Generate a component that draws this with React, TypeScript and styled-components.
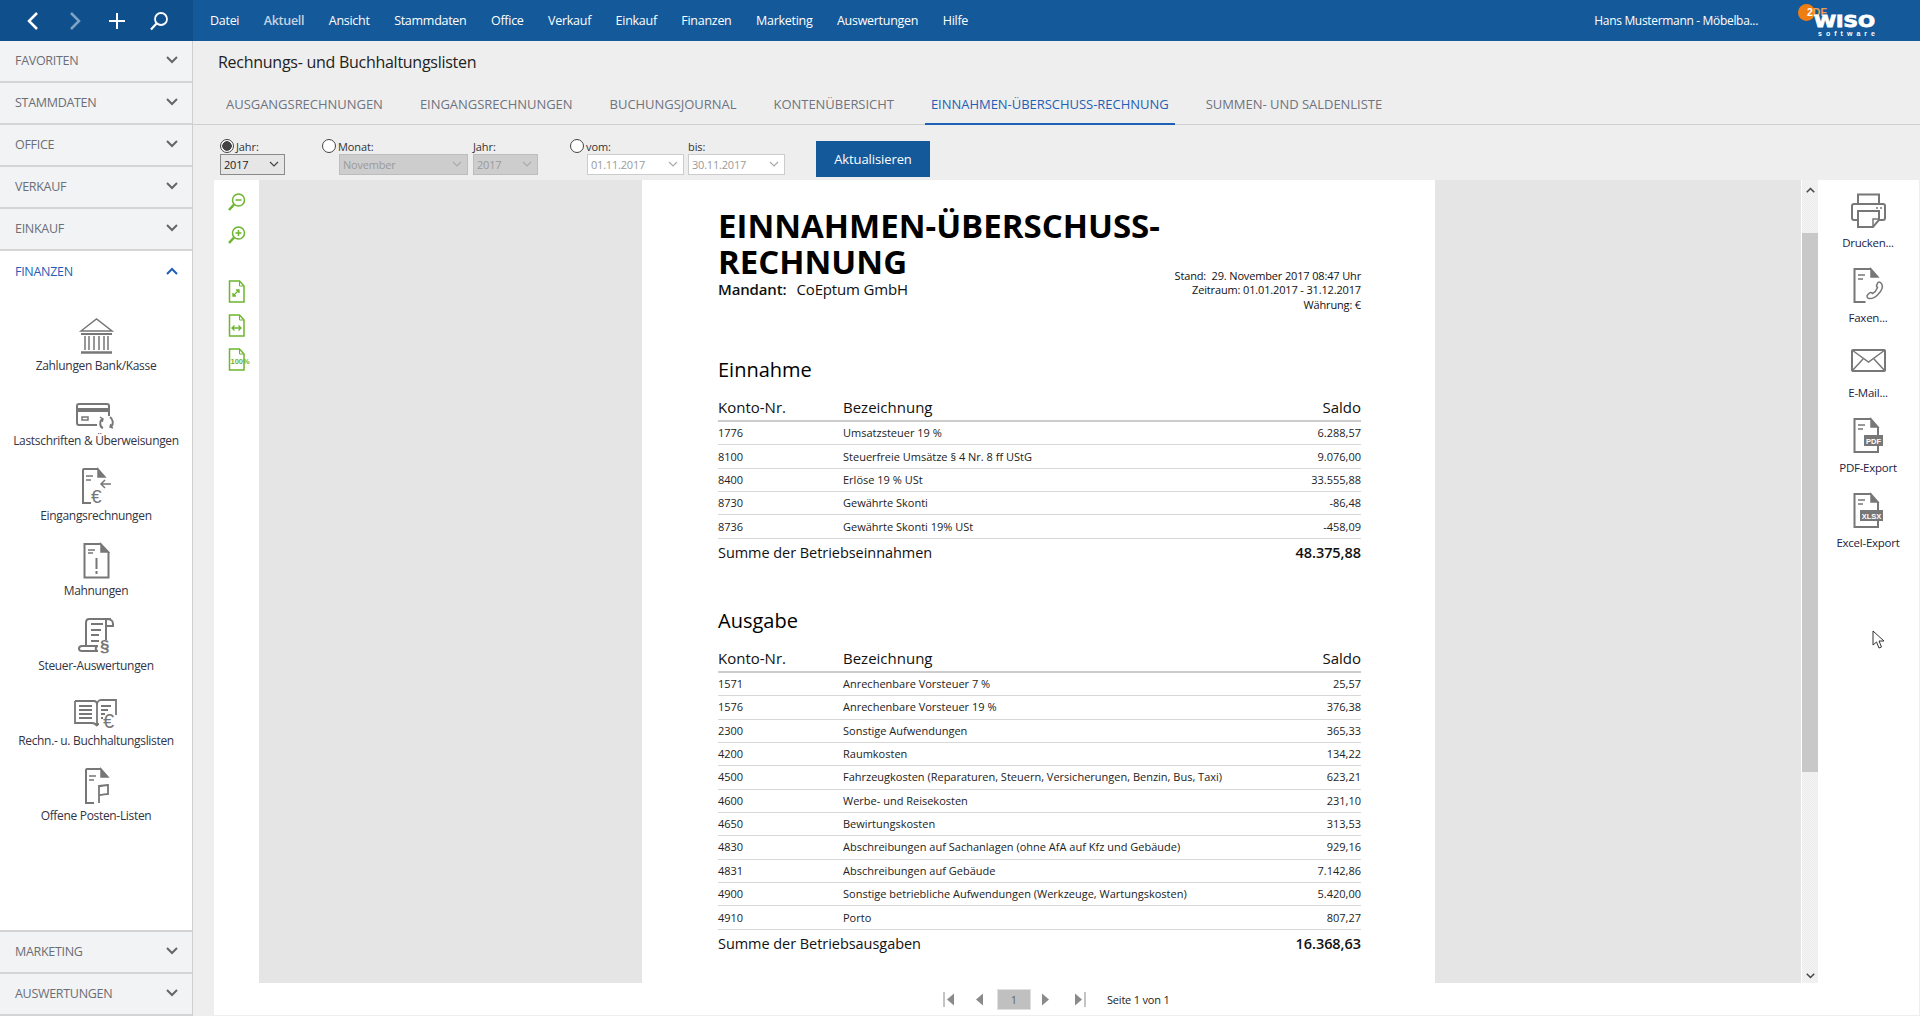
import { ReactNode } from "react";
import styled, { createGlobalStyle } from "styled-components";

const GlobalStyle = createGlobalStyle`
  html, body {
    margin: 0;
    padding: 0;
    overflow: hidden;
    background: #eeeeee;
    font-family: "Open Sans", "Noto Sans", sans-serif;
    color: #222;
  }
  * { box-sizing: border-box; }
  svg { overflow: visible; }
`;

const einnahmen = [
  ["1776", "Umsatzsteuer 19 %", "6.288,57"],
  ["8100", "Steuerfreie Umsätze § 4 Nr. 8 ff UStG", "9.076,00"],
  ["8400", "Erlöse 19 % USt", "33.555,88"],
  ["8730", "Gewährte Skonti", "-86,48"],
  ["8736", "Gewährte Skonti 19% USt", "-458,09"],
];

const ausgaben = [
  ["1571", "Anrechenbare Vorsteuer 7 %", "25,57"],
  ["1576", "Anrechenbare Vorsteuer 19 %", "376,38"],
  ["2300", "Sonstige Aufwendungen", "365,33"],
  ["4200", "Raumkosten", "134,22"],
  ["4500", "Fahrzeugkosten (Reparaturen, Steuern, Versicherungen, Benzin, Bus, Taxi)", "623,21"],
  ["4600", "Werbe- und Reisekosten", "231,10"],
  ["4650", "Bewirtungskosten", "313,53"],
  ["4830", "Abschreibungen auf Sachanlagen (ohne AfA auf Kfz und Gebäude)", "929,16"],
  ["4831", "Abschreibungen auf Gebäude", "7.142,86"],
  ["4900", "Sonstige betriebliche Aufwendungen (Werkzeuge, Wartungskosten)", "5.420,00"],
  ["4910", "Porto", "807,27"],
];

const menu = ["Datei", "Aktuell", "Ansicht", "Stammdaten", "Office", "Verkauf", "Einkauf", "Finanzen", "Marketing", "Auswertungen", "Hilfe"];
const tabs = ["AUSGANGSRECHNUNGEN", "EINGANGSRECHNUNGEN", "BUCHUNGSJOURNAL", "KONTENÜBERSICHT", "EINNAHMEN-ÜBERSCHUSS-RECHNUNG", "SUMMEN- UND SALDENLISTE"];

const G = "#777";
const Ico = ({ w, h, children, color = G }: { w: number; h: number; children: ReactNode; color?: string }) => (
  <svg width={w} height={h} viewBox={`0 0 ${w} ${h}`} fill="none" stroke={color} strokeWidth="2">
    {children}
  </svg>
);

const DocHead = () => (
  <>
    <path d="M18 1H4a1.500 1.500 0 0 0-1 1v33h8M2 1" strokeWidth="2" />
    <path d="M18 1l7 8h-7z" fill={G} strokeWidth="1.500" />
    <path d="M6 8h7M6 12h5" strokeWidth="1.500" />
  </>
);

const navItems: { label: string; icon: ReactNode }[] = [
  {
    label: "Zahlungen Bank/Kasse",
    icon: (
      <Ico w={33} h={36}>
        <path d="M1 13L16.500 1 32 13z" strokeWidth="1.500" />
        <path d="M1 16h31" />
        <path d="M5 18v14M9 18v14M14 18v14M19 18v14M24 18v14M28 18v14" strokeWidth="1.500" />
        <path d="M1 34.500h31" strokeWidth="2.500" />
      </Ico>
    ),
  },
  {
    label: "Lastschriften & Überweisungen",
    icon: (
      <Ico w={40} h={26}>
        <path d="M21 22H3a2 2 0 0 1-2-2V3a2 2 0 0 1 2-2h28a2 2 0 0 1 2 2v10" />
        <path d="M1 7h32" strokeWidth="4" />
        <rect x="6" y="14" width="6" height="3" strokeWidth="1.500" />
        <path d="M27 25c-3-1-4-6-1-9M34 14c3 2 4 7 1 10" />
        <path d="M24 14l3 2-1 3M37 25l-3-1 1-3" strokeWidth="1.500" />
      </Ico>
    ),
  },
  {
    label: "Eingangsrechnungen",
    icon: (
      <Ico w={32} h={36}>
        <DocHead />
        <path d="M31 16H21M25 12l-4 4 4 4" strokeWidth="1.500" />
        <text x="11" y="35" fontSize="19" fill={G} stroke="none" fontFamily="Liberation Sans">€</text>
      </Ico>
    ),
  },
  {
    label: "Mahnungen",
    icon: (
      <Ico w={27} h={36}>
        <path d="M18 1H1.500v33.500h24V9" />
        <path d="M18 1l7.500 8H18z" fill={G} strokeWidth="1.500" />
        <path d="M5 7h7M5 10h5" strokeWidth="1.500" />
        <path d="M13.500 15v11M13.500 28v3" strokeWidth="2" />
      </Ico>
    ),
  },
  {
    label: "Steuer-Auswertungen",
    icon: (
      <Ico w={36} h={36}>
        <path d="M33 1H11C8 1 8 3 8 5v23H4c-4 0-4 5 0 5h16c-3 0-3-5 0-5H8" />
        <path d="M28 1c6 0 7 2 7 5v2h-7V1M28 8v14" />
        <path d="M13 6h12M13 12h10M13 17h8M13 23h8" strokeWidth="1.800" />
        <text x="22" y="34" fontSize="17" fontWeight="700" fill={G} stroke="none" fontFamily="Liberation Sans">§</text>
      </Ico>
    ),
  },
  {
    label: "Rechn.- u. Buchhaltungslisten",
    icon: (
      <Ico w={45} h={30}>
        <path d="M1 2h19c2 0 3 2 3 4 0-3 2-5 4-5h15v15M23 6v20M1 2v22h17c2 0 4 1 5 3 0-1 1-2 2-2" strokeWidth="1.800" />
        <path d="M5 7h13M5 11h13M5 15h13M5 19h13M27 7h10M27 11h7M27 15h4M27 19h2" strokeWidth="1.800" />
        <text x="29" y="29" fontSize="20" fill={G} stroke="none" fontFamily="Liberation Sans">€</text>
      </Ico>
    ),
  },
  {
    label: "Offene Posten-Listen",
    icon: (
      <Ico w={27} h={36}>
        <DocHead />
        <path d="M16 35V18c4 0 5-1 9-1v9c-3 0-5 1-9 1" strokeWidth="1.800" />
      </Ico>
    ),
  },
];

const DocIcon = ({ outline, children }: { outline: string; children: ReactNode }) => (
  <Ico w={31} h={35}>
    <path d={outline} />
    <path d="M18 1l7 8h-7z" fill={G} strokeWidth="1.500" />
    <path d="M5 7h7M5 11h5" strokeWidth="1.500" />
    {children}
  </Ico>
);

const BadgeText = ({ x, w, text }: { x: number; w: number; text: string }) => (
  <>
    <rect x={x} y="17" width={w} height="11" fill={G} stroke="none" />
    <text x={x + w / 2} y="25.500" fontSize="7.500" fontWeight="700" textAnchor="middle" fill="#fff" stroke="none" fontFamily="Liberation Sans">
      {text}
    </text>
  </>
);

const actions: { label: string; icon: ReactNode }[] = [
  {
    label: "Drucken...",
    icon: (
      <Ico w={35} h={35}>
        <path d="M7 11V1.500h21V11" />
        <path d="M7 27H3a2 2 0 0 1-2-2V13a2 2 0 0 1 2-2h29a2 2 0 0 1 2 2v12a2 2 0 0 1-2 2h-4" />
        <path d="M7 18h21v9l-6 7H7z" />
        <path d="M28 26h-6v8" strokeWidth="1.500" />
        <path d="M25 15h2M29 15h2" strokeWidth="1.500" />
      </Ico>
    ),
  },
  {
    label: "Faxen...",
    icon: (
      <DocIcon outline="M18 1H1.500v33h11">
        <path
          d="M25 14.500c1.500-1 3 0 4 2 1 3-1 7-4 10-3 3-6 4.500-9 4-2-.5-2.500-2.500-1.500-3.500l2-2c1-.8 2-.5 3 .5 2-1 4-3 5-6-1-1-1.500-2-.5-3z"
          strokeWidth="1.500"
        />
      </DocIcon>
    ),
  },
  {
    label: "E-Mail...",
    icon: (
      <Ico w={35} h={23}>
        <rect x="1" y="1" width="33" height="21" rx="1" />
        <path d="M1 1l16.500 12L34 1M1 22l11-12M34 22L23 10" strokeWidth="1.500" />
      </Ico>
    ),
  },
  {
    label: "PDF-Export",
    icon: (
      <DocIcon outline="M18 1H1.500v33h23.500v-6M25 9v8">
        <BadgeText x={11} w={19} text="PDF" />
      </DocIcon>
    ),
  },
  {
    label: "Excel-Export",
    icon: (
      <DocIcon outline="M18 1H1.500v33h23.500v-6M25 9v8">
        <BadgeText x={7} w={23} text="XLSX" />
      </DocIcon>
    ),
  },
];

const Chevron = ({ up, color = "#666", small }: { up?: boolean; color?: string; small?: boolean }) => (
  <svg width={small ? 9 : 12} height={small ? 6 : 8} viewBox="0 0 12 8" fill="none" stroke={color} strokeWidth="2">
    <path d={up ? "M1 7l5-5 5 5" : "M1 1l5 5 5-5"} />
  </svg>
);

const SmallChevron = ({ color }: { color: string }) => (
  <svg width="10" height="6" viewBox="0 0 10 6" fill="none" stroke={color} strokeWidth="1.200">
    <path d="M1 1l4 4 4-4" />
  </svg>
);

const GreenPage = ({ children }: { children: ReactNode }) => (
  <svg width="22" height="23" viewBox="0 0 22 23" fill="none" stroke="#6cb52d" strokeWidth="1.500">
    <path d="M3.500 1h10l4.500 5v16H3.500z" />
    <path d="M13.500 1v5H18" strokeWidth="1" />
    {children}
  </svg>
);

const Lens = ({ plus }: { plus?: boolean }) => (
  <svg width="18" height="18" viewBox="0 0 18 18" fill="none" stroke="#6cb52d" strokeWidth="1.500">
    <circle cx="10.500" cy="7" r="6" />
    <path d="M6 11.500L1 17" strokeWidth="2.500" />
    <path d={plus ? "M7.500 7h6M10.500 4v6" : "M7.500 7h6"} />
  </svg>
);

const Tri = ({ dir, bar, left }: { dir: "l" | "r"; bar?: boolean; left: number }) => (
  <TriBox $left={left} width="13" height="15" viewBox="0 0 13 15" fill="#8a8a8a" stroke="none">
    {dir === "l" ? <path d="M11 1.500L4 7.500l7 6z" /> : <path d="M2 1.500l7 6-7 6z" />}
    {bar && <path d={dir === "l" ? "M0.500 0h1v15h-1z" : "M11.500 0h1v15h-1z"} />}
  </TriBox>
);

const Report = ({ title, rows, sumLabel, sum }: { title: string; rows: string[][]; sumLabel: string; sum: string }) => (
  <>
    <SectionTitle>{title}</SectionTitle>
    <HeadRow>
      <KontoCell>Konto-Nr.</KontoCell>
      <NameCell>Bezeichnung</NameCell>
      <span>Saldo</span>
    </HeadRow>
    {rows.map((r) => (
      <Row key={r[0]}>
        <KontoCell>{r[0]}</KontoCell>
        <NameCell>{r[1]}</NameCell>
        <span>{r[2]}</span>
      </Row>
    ))}
    <SumRow>
      <span>{sumLabel}</span>
      <SumValue>{sum}</SumValue>
    </SumRow>
  </>
);

const App = () => {
  return (
    <Shell>
      <GlobalStyle />
      <TopBar>
        <QuickActions>
          <QuickButton>
            <svg width="14" height="20" viewBox="0 0 14 20" fill="none" stroke="#fff" strokeWidth="2.500"><path d="M11 2L3 10l8 8" /></svg>
          </QuickButton>
          <QuickButton>
            <svg width="14" height="20" viewBox="0 0 14 20" fill="none" stroke="#7fa3c7" strokeWidth="2.500"><path d="M3 2l8 8-8 8" /></svg>
          </QuickButton>
          <QuickButton>
            <svg width="18" height="18" viewBox="0 0 18 18" fill="none" stroke="#fff" strokeWidth="2"><path d="M9 1v16M1 9h16" /></svg>
          </QuickButton>
          <QuickButton>
            <svg width="20" height="20" viewBox="0 0 20 20" fill="none" stroke="#fff" strokeWidth="1.800">
              <circle cx="12" cy="8" r="6" />
              <path d="M7.500 12.500L2 18.500" strokeWidth="2.200" />
            </svg>
          </QuickButton>
        </QuickActions>
        <Menu>
          {menu.map((m) => (
            <MenuItem key={m} $active={m === "Aktuell"}>{m}</MenuItem>
          ))}
        </Menu>
        <UserName>Hans Mustermann - Möbelba...</UserName>
        <svg width="80" height="41" viewBox="0 0 80 41">
          <circle cx="8.500" cy="12.500" r="8.500" fill="#f07d12" />
          <text x="9" y="16" fontSize="10.500" fontWeight="700" fill="#f0a050" fontFamily="Liberation Sans">
            <tspan fill="#fff">2</tspan>DF
          </text>
          <text x="16" y="27" fontSize="15" fontWeight="700" fill="#fff" stroke="#fff" strokeWidth="0.800" fontFamily="DejaVu Sans" textLength="61" lengthAdjust="spacingAndGlyphs">WISO</text>
          <text x="20" y="36" fontSize="7" fontWeight="700" fill="#fff" fontFamily="Liberation Sans" textLength="57">software</text>
        </svg>
      </TopBar>
      <Body>
        <Sidebar>
          {["FAVORITEN", "STAMMDATEN", "OFFICE", "VERKAUF", "EINKAUF"].map((s) => (
            <GroupHead key={s}>
              {s}
              <Chevron />
            </GroupHead>
          ))}
          <GroupHead $open>
            FINANZEN
            <Chevron up color="#1f5fb5" />
          </GroupHead>
          <NavPanel>
            {navItems.map((n) => (
              <NavItem key={n.label}>
                <NavIcon>{n.icon}</NavIcon>
                <NavLabel>{n.label}</NavLabel>
              </NavItem>
            ))}
          </NavPanel>
          {["MARKETING", "AUSWERTUNGEN"].map((s) => (
            <GroupHead key={s}>
              {s}
              <Chevron />
            </GroupHead>
          ))}
        </Sidebar>
        <Main>
          <PageTitle>Rechnungs- und Buchhaltungslisten</PageTitle>
          <Tabs>
            {tabs.map((t) => (
              <Tab key={t} $active={t.startsWith("EINNAHMEN")}>{t}</Tab>
            ))}
          </Tabs>
          <Filters>
            <FilterGroup $width={102}>
              <FilterLabel><Radio $checked />Jahr:</FilterLabel>
              <Select $width={65}>2017<SmallChevron color="#444" /></Select>
            </FilterGroup>
            <FilterGroup $width={151}>
              <FilterLabel><Radio />Monat:</FilterLabel>
              <Select $width={129} $inset={17} $disabled>November<SmallChevron color="#aaa" /></Select>
            </FilterGroup>
            <FilterGroup $width={97}>
              <FilterLabel>Jahr:</FilterLabel>
              <Select $width={65} $disabled>2017<SmallChevron color="#aaa" /></Select>
            </FilterGroup>
            <FilterGroup $width={118}>
              <FilterLabel><Radio />vom:</FilterLabel>
              <Select $width={97} $inset={17} $date>01.11.2017<SmallChevron color="#aaa" /></Select>
            </FilterGroup>
            <FilterGroup $width={128}>
              <FilterLabel>bis:</FilterLabel>
              <Select $width={97} $date>30.11.2017<SmallChevron color="#aaa" /></Select>
            </FilterGroup>
            <UpdateButton>Aktualisieren</UpdateButton>
          </Filters>
          <Workspace>
            <ToolColumn>
              <ToolButton $top={13}><Lens /></ToolButton>
              <ToolButton $top={15}><Lens plus /></ToolButton>
              <ToolButton $top={36}>
                <GreenPage>
                  <path d="M7 16l6-6M10 10h3v3M7 13v3h3" strokeWidth="1.300" />
                </GreenPage>
              </ToolButton>
              <ToolButton $top={11}>
                <GreenPage>
                  <path d="M6 14h9M8.500 11.500L6 14l2.500 2.500M12.500 11.500L15 14l-2.500 2.500" strokeWidth="1.300" />
                </GreenPage>
              </ToolButton>
              <ToolButton $top={11}>
                <GreenPage>
                  <text x="4.500" y="16" fontSize="7.500" fontWeight="700" fill="#6cb52d" stroke="none" fontFamily="Liberation Sans">100%</text>
                </GreenPage>
              </ToolButton>
            </ToolColumn>
            <Center>
              <Stage>
                <Gray>
                  <Paper>
                    <PaperHead>
                      <div>
                        <ReportTitle>EINNAHMEN-ÜBERSCHUSS-<br />RECHNUNG</ReportTitle>
                        <Client><strong>Mandant:</strong><span>CoEptum GmbH</span></Client>
                      </div>
                      <Meta>
                        <div>Stand:&nbsp; 29. November 2017 08:47 Uhr</div>
                        <div>Zeitraum: 01.01.2017 - 31.12.2017</div>
                        <div>Währung: €</div>
                      </Meta>
                    </PaperHead>
                    <Report title="Einnahme" rows={einnahmen} sumLabel="Summe der Betriebseinnahmen" sum="48.375,88" />
                    <Report title="Ausgabe" rows={ausgaben} sumLabel="Summe der Betriebsausgaben" sum="16.368,63" />
                  </Paper>
                </Gray>
                <Scrollbar>
                  <ScrollEnd $h={53}>
                    <Chevron up small color="#444" />
                  </ScrollEnd>
                  <Thumb />
                  <ScrollEnd $h={211} $bottom>
                    <Chevron small color="#444" />
                  </ScrollEnd>
                </Scrollbar>
              </Stage>
              <Pager>
                <Tri dir="l" bar left={0} />
                <Tri dir="l" left={16} />
                <PageBox>1</PageBox>
                <Tri dir="r" left={9} />
                <Tri dir="r" bar left={20} />
                <PagerText>Seite 1 von 1</PagerText>
              </Pager>
            </Center>
            <ActionPanel>
              {actions.map((a) => (
                <ActionItem key={a.label}>
                  <ActionIcon>{a.icon}</ActionIcon>
                  <ActionLabel>{a.label}</ActionLabel>
                </ActionItem>
              ))}
            </ActionPanel>
          </Workspace>
        </Main>
      </Body>
      <Cursor width="13" height="19" viewBox="0 0 13 19" fill="#fff" stroke="#333" strokeWidth="1">
        <path d="M1 1v14l3.500-3 2.500 6 2.500-1-2.500-6H12z" />
      </Cursor>
    </Shell>
  );
};

export default App;

const Shell = styled.div`
  position: relative;
  width: 1920px;
  height: 1016px;
  display: flex;
  flex-direction: column;
  overflow: hidden;
`;

const Cursor = styled.svg`
  position: absolute;
  left: 1872px;
  top: 630px;
`;

const TopBar = styled.header`
  display: flex;
  align-items: center;
  height: 41px;
  background: #14599a;
  padding-right: 42px;
`;

const QuickActions = styled.div`
  display: flex;
  align-items: center;
  height: 100%;
  width: 193px;
  background: #0f4f8c;
  padding-left: 12px;
`;

const QuickButton = styled.div`
  display: flex;
  align-items: center;
  justify-content: center;
  width: 42px;
  height: 100%;
`;

const Menu = styled.nav`
  display: flex;
  gap: 24.500px;
  padding-left: 17px;
`;

const MenuItem = styled.span<{ $active?: boolean }>`
  font-size: 12.500px;
  letter-spacing: -0.280px;
  color: ${(p) => (p.$active ? "#c5d3e2" : "#fff")};
  font-weight: ${(p) => (p.$active ? 600 : 400)};
`;

const UserName = styled.span`
  margin-left: auto;
  margin-right: 40px;
  font-size: 12px;
  letter-spacing: -0.320px;
  color: #fff;
  font-weight: 500;
`;

const Body = styled.div`
  flex: 1;
  display: flex;
  min-height: 0;
`;

const Sidebar = styled.aside`
  width: 193px;
  display: flex;
  flex-direction: column;
  background: #fff;
  border-right: 1px solid #cfcfcf;
`;

const GroupHead = styled.div<{ $open?: boolean }>`
  flex: none;
  display: flex;
  align-items: center;
  justify-content: space-between;
  height: 42px;
  padding: 0 14px 2px 15px;
  font-size: 12.500px;
  letter-spacing: -0.300px;
  font-weight: 500;
  color: ${(p) => (p.$open ? "#1f5fb5" : "#6b6e75")};
  background: ${(p) => (p.$open ? "#fff" : "#f2f3f5")};
  border-bottom: ${(p) => (p.$open ? "none" : "2px solid #d4d4d4")};
`;

const NavPanel = styled.div`
  flex: 1;
  display: flex;
  flex-direction: column;
  padding-top: 23px;
  border-bottom: 2px solid #d4d4d4;
`;

const NavItem = styled.div`
  flex: none;
  height: 75px;
  display: flex;
  flex-direction: column;
  align-items: center;
  padding-top: 2px;
  gap: 4px;
`;

const NavIcon = styled.div`
  height: 36px;
  display: flex;
  align-items: flex-end;
  justify-content: center;
`;

const NavLabel = styled.span`
  font-size: 12px;
  line-height: 16px;
  letter-spacing: -0.320px;
  color: #333344;
  white-space: nowrap;
`;

const Main = styled.main`
  flex: 1;
  min-width: 0;
  display: flex;
  flex-direction: column;
`;

const PageTitle = styled.h1`
  flex: none;
  margin: 0;
  height: 42px;
  display: flex;
  align-items: center;
  padding-left: 25px;
  font-size: 16px;
  font-weight: 500;
  letter-spacing: -0.270px;
  color: #222;
`;

const Tabs = styled.div`
  flex: none;
  display: flex;
  gap: 25px;
  height: 41.500px;
  padding-left: 27px;
  border-bottom: 1.500px solid #cfcfcf;
`;

const Tab = styled.div<{ $active?: boolean }>`
  display: flex;
  align-items: center;
  padding: 2px 6px 0;
  margin-bottom: -1.500px;
  font-size: 13px;
  letter-spacing: -0.030px;
  white-space: nowrap;
  color: ${(p) => (p.$active ? "#1f5fb5" : "#6f7480")};
  border-bottom: 2.500px solid ${(p) => (p.$active ? "#1f5fb5" : "transparent")};
`;

const Filters = styled.div`
  flex: none;
  display: flex;
  align-items: flex-start;
  height: 55.500px;
  padding: 14px 0 0 27px;
`;

const FilterGroup = styled.div<{ $width: number }>`
  flex: none;
  width: ${(p) => p.$width}px;
  display: flex;
  flex-direction: column;
`;

const FilterLabel = styled.label`
  display: flex;
  align-items: center;
  gap: 2px;
  height: 15px;
  font-size: 11px;
  letter-spacing: -0.100px;
  color: #333;
`;

const Radio = styled.span<{ $checked?: boolean }>`
  flex: none;
  width: 14px;
  height: 14px;
  border-radius: 50%;
  border: 1px solid #444;
  background: ${(p) => (p.$checked ? "radial-gradient(circle, #444 0 4.500px, #fff 5px)" : "#fff")};
`;

const Select = styled.div<{ $width: number; $inset?: number; $disabled?: boolean; $date?: boolean }>`
  display: flex;
  align-items: center;
  justify-content: space-between;
  width: ${(p) => p.$width}px;
  height: 21px;
  margin-left: ${(p) => p.$inset ?? 0}px;
  padding: 0 5px 0 3px;
  font-size: 11px;
  letter-spacing: -0.200px;
  color: ${(p) => (p.$disabled || p.$date ? "#9a9a9a" : "#222")};
  background: ${(p) => (p.$date ? "#fff" : p.$disabled ? "#cdcdcd" : "#e6e6e6")};
  border: 1px solid ${(p) => (p.$date ? "#cccccc" : p.$disabled ? "#bdbdbd" : "#8a8a8a")};
`;

const UpdateButton = styled.button`
  flex: none;
  width: 114px;
  height: 36px;
  margin-top: 2px;
  border: none;
  background: #14599a;
  color: #fff;
  font-family: inherit;
  font-size: 13px;
  letter-spacing: -0.100px;
`;

const Workspace = styled.section`
  flex: 1;
  min-height: 0;
  display: flex;
  margin: 0 1px 1px 21px;
  background: #fff;
`;

const ToolColumn = styled.div`
  flex: none;
  width: 45px;
  display: flex;
  flex-direction: column;
  align-items: center;
`;

const ToolButton = styled.div<{ $top: number }>`
  display: flex;
  margin-top: ${(p) => p.$top}px;
`;

const Center = styled.div`
  flex: 1;
  min-width: 0;
  display: flex;
  flex-direction: column;
`;

const Stage = styled.div`
  flex: none;
  height: 803px;
  display: flex;
`;

const Gray = styled.div`
  flex: 1;
  min-width: 0;
  background: #e5e5e5;
  padding-left: 383px;
  overflow: hidden;
`;

const Paper = styled.article`
  width: 793px;
  height: 100%;
  padding: 28px 74px 0 76px;
  background: #fff;
  color: #111;
`;

const PaperHead = styled.div`
  display: flex;
  justify-content: space-between;
  align-items: flex-end;
  height: 104px;
`;

const ReportTitle = styled.h2`
  margin: 0;
  font-size: 33px;
  line-height: 36px;
  font-weight: 700;
  color: #000;
  white-space: nowrap;
`;

const Client = styled.div`
  display: flex;
  gap: 10px;
  height: 32px;
  line-height: 18px;
  font-size: 15px;
  letter-spacing: -0.150px;
  strong { font-weight: 600; }
`;

const Meta = styled.div`
  font-size: 11px;
  line-height: 14.500px;
  letter-spacing: -0.150px;
  text-align: right;
  white-space: nowrap;
`;

const SectionTitle = styled.h3`
  margin: 44px 0 12px;
  height: 28px;
  line-height: 28px;
  font-size: 20px;
  font-weight: 500;
  color: #000;

  & ~ & { margin-top: 39px; }
`;

const HeadRow = styled.div`
  display: flex;
  align-items: center;
  height: 26px;
  padding-bottom: 2px;
  font-size: 15px;
  border-bottom: 2px solid #cccccc;
  font-weight: 500;
`;

const KontoCell = styled.span`
  flex: none;
  width: 125px;
`;

const NameCell = styled.span`
  flex: 1;
  white-space: nowrap;
`;

const Row = styled.div`
  display: flex;
  align-items: center;
  height: 23.360px;
  padding-bottom: 1px;
  font-size: 11px;
  color: #222;
  border-bottom: 1px solid #d8d8d8;
`;

const SumRow = styled.div`
  display: flex;
  align-items: center;
  justify-content: space-between;
  height: 29px;
  padding-bottom: 2px;
  font-size: 14.500px;
  letter-spacing: -0.050px;
  font-weight: 500;
`;

const SumValue = styled.span`
  font-size: 14.500px;
  font-weight: 600;
`;

const Scrollbar = styled.div`
  flex: none;
  width: 16px;
  margin-left: 1px;
  display: flex;
  flex-direction: column;
`;

const ScrollEnd = styled.div<{ $h: number; $bottom?: boolean }>`
  flex: none;
  height: ${(p) => p.$h}px;
  display: flex;
  justify-content: center;
  align-items: ${(p) => (p.$bottom ? "flex-end" : "flex-start")};
  padding: 7px 0 4px;
  background: repeating-conic-gradient(#f5f5f5 0 25%, #ebebeb 0 50%) 0 0 / 2px 2px;
`;

const Thumb = styled.div`
  flex: none;
  height: 539px;
  background: #c8c8c8;
`;

const Pager = styled.div`
  flex: 1;
  display: flex;
  align-items: center;
  padding-left: 684px;
`;

const TriBox = styled.svg<{ $left: number }>`
  flex: none;
  margin-left: ${(p) => p.$left}px;
`;

const PageBox = styled.div`
  width: 34px;
  height: 21px;
  margin-left: 12px;
  display: flex;
  align-items: center;
  justify-content: center;
  font-size: 11px;
  color: #666;
  background: #c0c0c0;
  border: 1px solid #e0e0e0;
`;

const PagerText = styled.span`
  margin-left: 21px;
  font-size: 11px;
  letter-spacing: -0.200px;
  color: #222;
`;

const ActionPanel = styled.aside`
  flex: none;
  width: 100px;
  margin-right: 1px;
  display: flex;
  flex-direction: column;
  padding-top: 13px;
`;

const ActionItem = styled.div`
  flex: none;
  height: 75px;
  display: flex;
  flex-direction: column;
  align-items: center;
  gap: 7px;
`;

const ActionIcon = styled.div`
  height: 35px;
  display: flex;
  align-items: center;
`;

const ActionLabel = styled.span`
  font-size: 11.500px;
  line-height: 16px;
  letter-spacing: -0.250px;
  color: #222244;
  white-space: nowrap;
`;
